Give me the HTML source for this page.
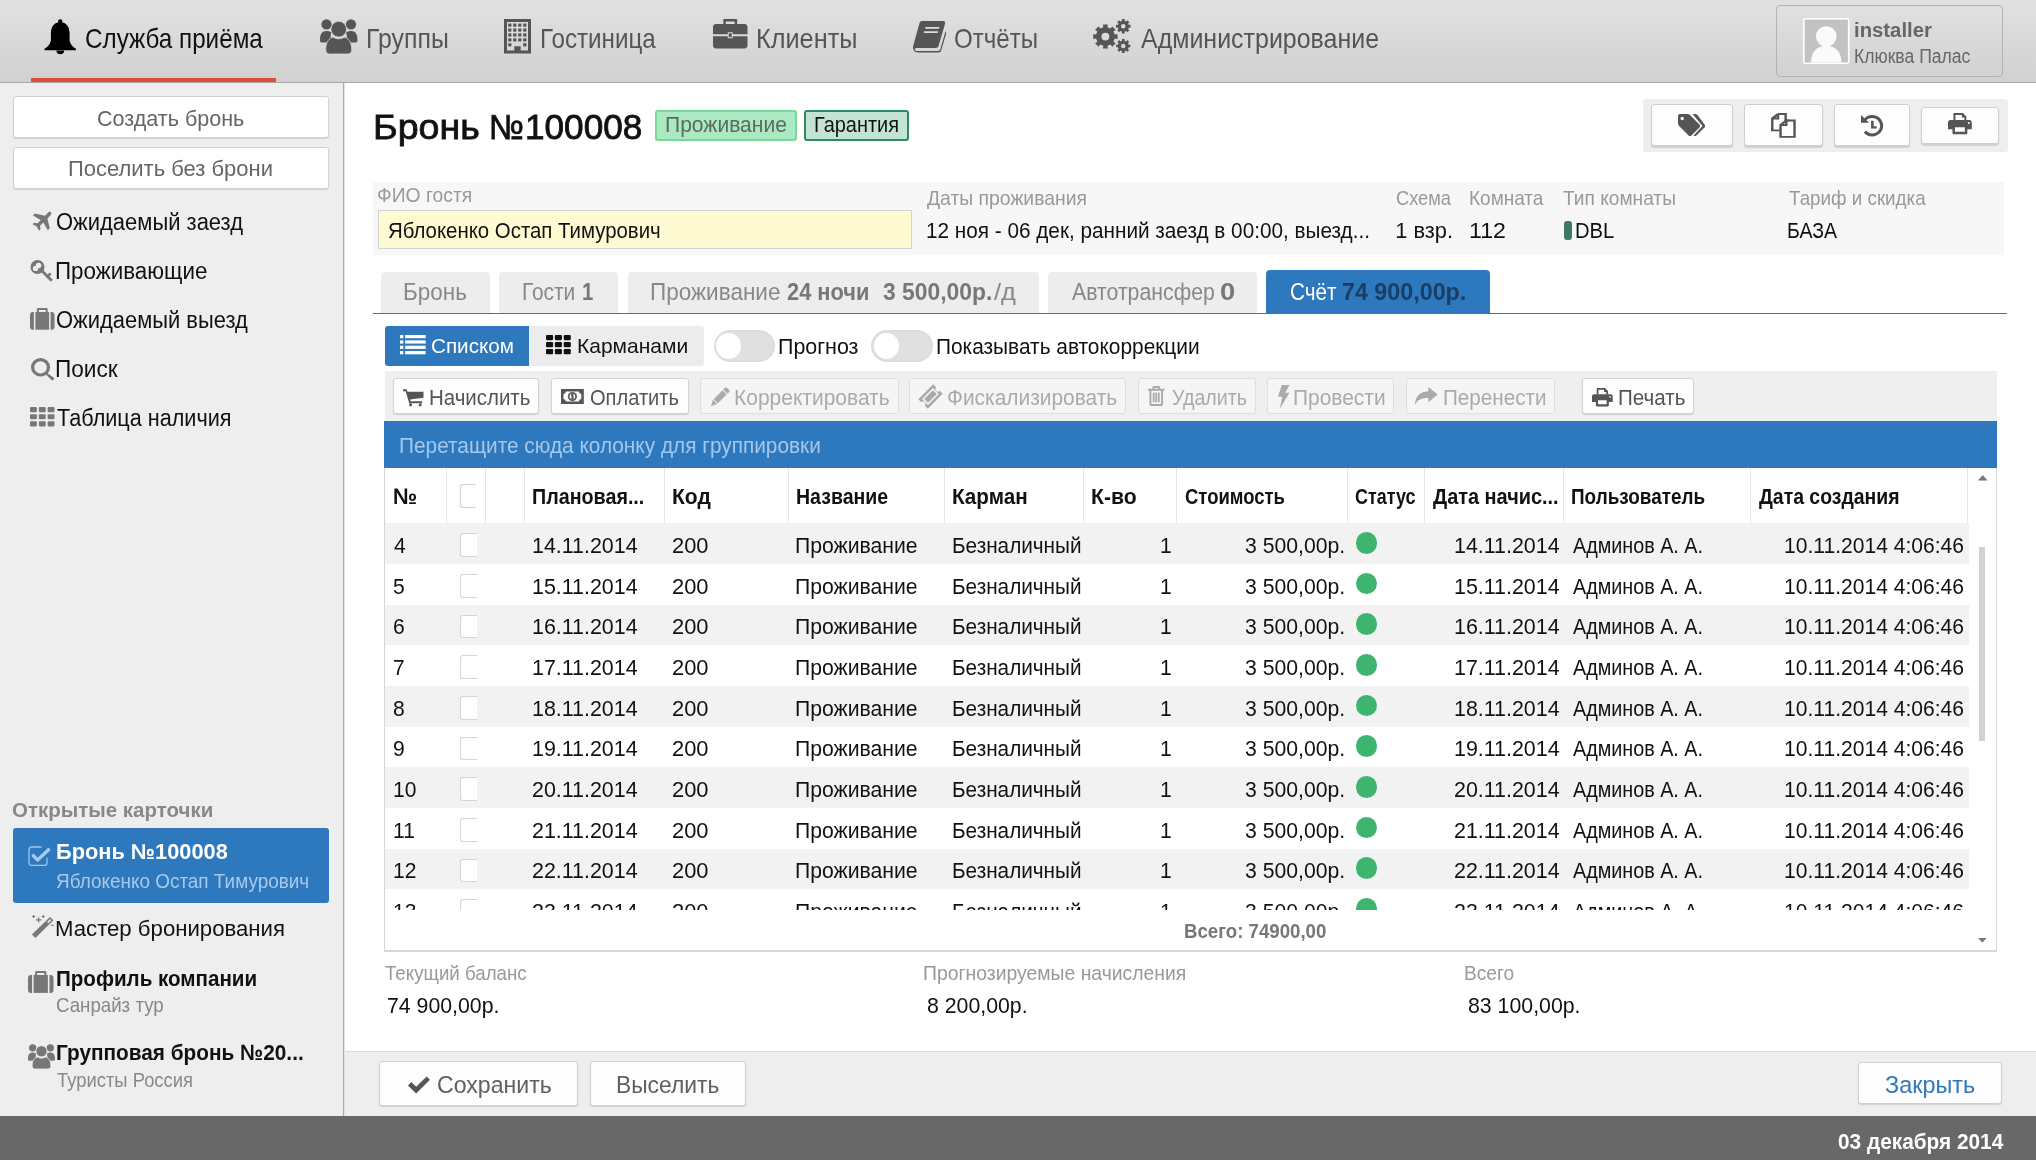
<!DOCTYPE html>
<html><head><meta charset="utf-8"><title>Бронь №100008</title>
<style>
html,body{margin:0;padding:0;}
body{width:2036px;height:1160px;position:relative;overflow:hidden;background:#fff;font-family:"Liberation Sans",sans-serif;}
.t{position:absolute;white-space:nowrap;transform-origin:0 0;}
.b{position:absolute;}
.i{position:absolute;overflow:visible;}
#root{position:absolute;left:0;top:0;width:2036px;height:1160px;overflow:hidden;will-change:transform;background:#fff;}
</style></head><body>
<div id="root">
<div class="b" style="left:0.00px;top:0.00px;width:2036.00px;height:82.00px;background:linear-gradient(#e1e1e1,#d1d1d1);"></div>
<div class="b" style="left:0.00px;top:82.00px;width:2036.00px;height:1.00px;background:#a9a9a9;"></div>
<div class="b" style="left:31.00px;top:78.00px;width:245.00px;height:3.50px;background:#e2493a;"></div>
<svg class="i" style="left:43.50px;top:19.00px;width:32.50px;height:35.00px;fill:#000;" viewBox="0 0 32 35" preserveAspectRatio="none"><circle cx="16" cy="2.4" r="2.2"/><path d="M16 3.2C9.8 3.2 6.8 8 6.8 14.5V20.5C6.8 24.5 4 27.5 0.5 29.8V31.2H31.5V29.8C28 27.5 25.2 24.5 25.2 20.5V14.5C25.2 8 22.2 3.2 16 3.2Z"/><path d="M12.2 31.5A3.8 3.8 0 0 0 19.8 31.5Z"/></svg>
<div class="t" style="left:84.79px;top:25.37px;font-size:27.91px;line-height:27.91px;color:#111;transform:scaleX(0.8682);">Служба приёма</div>
<svg class="i" style="left:320.00px;top:19.00px;width:37.50px;height:35.00px;fill:#555;" viewBox="0 0 38 35" preserveAspectRatio="none"><circle cx="6.6" cy="5.4" r="5.2"/><circle cx="31.4" cy="5.4" r="5.2"/><path d="M0 21C0 15 2 12 6.6 12C8.6 12 10.2 12.5 11.8 13.5C10.8 15 10.6 17 11 19.5C10 20.5 9 21.5 8.5 23.5H1.5C0.5 23.5 0 22.5 0 21Z"/><path d="M38 21C38 15 36 12 31.4 12C29.4 12 27.8 12.5 26.2 13.5C27.2 15 27.4 17 27 19.5C28 20.5 29 21.5 29.5 23.5H36.5C37.5 23.5 38 22.5 38 21Z"/><circle cx="19" cy="10.2" r="7.9" stroke="#d8d8d8" stroke-width="0.8"/><path d="M5.8 30.5C5.8 23 9.5 18.6 13.6 18.2C15.2 19.3 17 19.8 19 19.8C21 19.8 22.8 19.3 24.4 18.2C28.5 18.6 32.2 23 32.2 30.5C32.2 33.5 30.5 35 28.2 35H9.8C7.5 35 5.8 33.5 5.8 30.5Z" stroke="#d8d8d8" stroke-width="0.8"/></svg>
<div class="t" style="left:365.51px;top:25.07px;font-size:27.91px;line-height:27.91px;color:#555;transform:scaleX(0.8910);">Группы</div>
<svg class="i" style="left:504.00px;top:19.00px;width:27.00px;height:34.50px;fill:#555;" viewBox="0 0 27 35" preserveAspectRatio="none"><path fill-rule="evenodd" d="M0 0H27V35H0ZM3 3V32H10.3V27.6H16.7V32H24V3Z"/><rect x="4.2" y="4.6" width="3.2" height="3.2"/><rect x="9.2" y="4.6" width="3.2" height="3.2"/><rect x="14.2" y="4.6" width="3.2" height="3.2"/><rect x="19.2" y="4.6" width="3.2" height="3.2"/><rect x="4.2" y="9.6" width="3.2" height="3.2"/><rect x="9.2" y="9.6" width="3.2" height="3.2"/><rect x="14.2" y="9.6" width="3.2" height="3.2"/><rect x="19.2" y="9.6" width="3.2" height="3.2"/><rect x="4.2" y="14.6" width="3.2" height="3.2"/><rect x="9.2" y="14.6" width="3.2" height="3.2"/><rect x="14.2" y="14.6" width="3.2" height="3.2"/><rect x="19.2" y="14.6" width="3.2" height="3.2"/><rect x="4.2" y="19.6" width="3.2" height="3.2"/><rect x="9.2" y="19.6" width="3.2" height="3.2"/><rect x="14.2" y="19.6" width="3.2" height="3.2"/><rect x="19.2" y="19.6" width="3.2" height="3.2"/><rect x="4.2" y="24.6" width="3.2" height="3.2"/><rect x="19.2" y="24.6" width="3.2" height="3.2"/></svg>
<div class="t" style="left:539.77px;top:25.07px;font-size:27.91px;line-height:27.91px;color:#555;transform:scaleX(0.8667);">Гостиница</div>
<svg class="i" style="left:713.00px;top:19.20px;width:34.50px;height:29.50px;fill:#555;" viewBox="0 0 35 30" preserveAspectRatio="none"><path fill-rule="evenodd" d="M10.5 0H24.5V5H22V2.5H13V5H10.5Z"/><path d="M0 8C0 6 1.5 5 3 5H32C33.5 5 35 6 35 8V15.5H20V13.5H15V15.5H0Z"/><path d="M0 17.5H15V19.5H20V17.5H35V27C35 28.5 34 30 32 30H3C1 30 0 28.5 0 27Z"/><rect x="16" y="14.5" width="3" height="4"/></svg>
<div class="t" style="left:755.98px;top:25.07px;font-size:27.91px;line-height:27.91px;color:#555;transform:scaleX(0.9060);">Клиенты</div>
<svg class="i" style="left:913.00px;top:20.50px;width:33.00px;height:31.50px;fill:#555;" viewBox="0 0 33 32" preserveAspectRatio="none"><path d="M9 0H30C32 0 32.5 1.5 32 3L25.5 25.5C25 27 24 27.5 22.5 27.5H3.5C2 27.5 1.5 28.5 2 29.5C2.5 30.2 3.2 30.5 4.5 30.5H25C26 30.5 27 29.8 27.3 28.8L32.5 10.5L33 12C33.2 12.5 33.2 13 33 13.5L28 30.5C27.5 31.5 26.5 32 25 32H5C2.5 32 0.5 30.5 0 28C-0.2 27 0 26 0.3 25L6.5 2C7 0.7 7.8 0 9 0Z"/><path d="M12.5 6H26.5L26 7.8H12Z M11.2 10.5H25.2L24.7 12.3H10.7Z" fill="#dcdcdc"/></svg>
<div class="t" style="left:953.92px;top:25.07px;font-size:27.91px;line-height:27.91px;color:#555;transform:scaleX(0.8632);">Отчёты</div>
<svg class="i" style="left:1093.40px;top:19.30px;width:37.60px;height:34.10px;fill:#555;" viewBox="0 0 37 34" preserveAspectRatio="none"><path fill-rule="evenodd" d="M21.38 15.49 L24.17 15.12 L24.17 19.88 L21.38 19.51 L20.12 22.57 L22.34 24.28 L18.98 27.64 L17.27 25.42 L14.21 26.68 L14.58 29.47 L9.82 29.47 L10.19 26.68 L7.13 25.42 L5.42 27.64 L2.06 24.28 L4.28 22.57 L3.02 19.51 L0.23 19.88 L0.23 15.12 L3.02 15.49 L4.28 12.43 L2.06 10.72 L5.42 7.36 L7.13 9.58 L10.19 8.32 L9.82 5.53 L14.58 5.53 L14.21 8.32 L17.27 9.58 L18.98 7.36 L22.34 10.72 L20.12 12.43 Z M8.30 17.50 a3.90 3.90 0 1 0 7.80 0 a3.90 3.90 0 1 0 -7.80 0 Z"/><path fill-rule="evenodd" d="M35.27 6.00 L36.96 5.78 L36.96 8.62 L35.27 8.40 L34.52 10.22 L35.87 11.26 L33.86 13.27 L32.82 11.92 L31.00 12.67 L31.22 14.36 L28.38 14.36 L28.60 12.67 L26.78 11.92 L25.74 13.27 L23.73 11.26 L25.08 10.22 L24.33 8.40 L22.64 8.62 L22.64 5.78 L24.33 6.00 L25.08 4.18 L23.73 3.14 L25.74 1.13 L26.78 2.48 L28.60 1.73 L28.38 0.04 L31.22 0.04 L31.00 1.73 L32.82 2.48 L33.86 1.13 L35.87 3.14 L34.52 4.18 Z M27.60 7.20 a2.20 2.20 0 1 0 4.40 0 a2.20 2.20 0 1 0 -4.40 0 Z"/><path fill-rule="evenodd" d="M35.07 25.74 L36.76 25.51 L36.76 28.29 L35.07 28.06 L34.35 29.81 L35.70 30.84 L33.74 32.80 L32.71 31.45 L30.96 32.17 L31.19 33.86 L28.41 33.86 L28.64 32.17 L26.89 31.45 L25.86 32.80 L23.90 30.84 L25.25 29.81 L24.53 28.06 L22.84 28.29 L22.84 25.51 L24.53 25.74 L25.25 23.99 L23.90 22.96 L25.86 21.00 L26.89 22.35 L28.64 21.63 L28.41 19.94 L31.19 19.94 L30.96 21.63 L32.71 22.35 L33.74 21.00 L35.70 22.96 L34.35 23.99 Z M27.60 26.90 a2.20 2.20 0 1 0 4.40 0 a2.20 2.20 0 1 0 -4.40 0 Z"/></svg>
<div class="t" style="left:1140.50px;top:25.07px;font-size:27.91px;line-height:27.91px;color:#555;transform:scaleX(0.8948);">Администрирование</div>
<div class="b" style="left:1775.50px;top:5.00px;width:227.00px;height:71.50px;border:1px solid #b3b3b3;border-radius:4px;box-sizing:border-box;"></div>
<svg class="i" style="left:1803.00px;top:17.60px;width:46.50px;height:46.10px;" viewBox="0 0 46 46" preserveAspectRatio="none"><rect x="0" y="0" width="46" height="46" rx="2.5" fill="#ffffff"/><rect x="1.6" y="1.6" width="42.8" height="42.8" fill="#c2c2c2"/><circle cx="23" cy="18.5" r="10.2" fill="#fafafa"/><path d="M8 44.4C8 34 13.5 27.8 23 27.8C32.5 27.8 38 34 38 44.4Z" fill="#fafafa"/></svg>
<div class="t" style="left:1853.88px;top:19.78px;font-size:20.93px;line-height:20.93px;color:#666;font-weight:bold;transform:scaleX(0.9708);">installer</div>
<div class="t" style="left:1854.09px;top:46.53px;font-size:19.33px;line-height:19.33px;color:#666;transform:scaleX(0.9091);">Клюква Палас</div>
<div class="b" style="left:0.00px;top:83.00px;width:343.00px;height:1033.00px;background:#eeeeee;"></div>
<div class="b" style="left:343.00px;top:83.00px;width:1.00px;height:1033.00px;background:#ababab;"></div>
<div class="b" style="left:344.00px;top:83.00px;width:1.00px;height:1033.00px;background:#e2e2e2;"></div>
<div class="b" style="left:13.00px;top:96.00px;width:316.00px;height:41.50px;background:#fff;border:1px solid #d2d2d2;border-radius:3px;box-sizing:border-box;box-shadow:0 1px 1px rgba(0,0,0,0.12);"></div>
<div class="t" style="left:97.42px;top:106.60px;font-size:22.67px;line-height:22.67px;color:#666;transform:scaleX(0.9513);">Создать бронь</div>
<div class="b" style="left:13.00px;top:147.00px;width:316.00px;height:41.50px;background:#fff;border:1px solid #d2d2d2;border-radius:3px;box-sizing:border-box;box-shadow:0 1px 1px rgba(0,0,0,0.12);"></div>
<div class="t" style="left:68.44px;top:157.40px;font-size:22.67px;line-height:22.67px;color:#666;transform:scaleX(0.9700);">Поселить без брони</div>
<svg class="i" style="left:32.50px;top:210.00px;width:20.00px;height:20.50px;fill:#777;" viewBox="0 0 20 20.5" preserveAspectRatio="none"><g transform="rotate(45 10 10.25)"><path d="M10 -1C11.3 -1 11.8 0.5 11.8 2V5.8L20.5 11.2V14L11.8 11.6V16.2L14.6 18.4V20.4L10 19.2L5.4 20.4V18.4L8.2 16.2V11.6L-0.5 14V11.2L8.2 5.8V2C8.2 0.5 8.7 -1 10 -1Z"/></g></svg>
<div class="t" style="left:56.01px;top:209.82px;font-size:24.42px;line-height:24.42px;color:#111;transform:scaleX(0.9000);">Ожидаемый заезд</div>
<svg class="i" style="left:30.00px;top:259.50px;width:23.00px;height:22.00px;fill:#777;" viewBox="0 0 23 22" preserveAspectRatio="none"><circle cx="7.5" cy="7" r="7"/><circle cx="5.6" cy="8.4" r="2.7" fill="#eeeeee"/><circle cx="8.6" cy="5.4" r="2.7" fill="#eeeeee"/><path d="M10.8 11.8L12.8 9.8L22.8 19.8L20.8 21.8Z"/><path d="M15.6 16.6L19.8 12.4L21.6 14.2L17.4 18.4Z"/></svg>
<div class="t" style="left:55.21px;top:258.82px;font-size:24.42px;line-height:24.42px;color:#111;transform:scaleX(0.9170);">Проживающие</div>
<svg class="i" style="left:30.00px;top:308.30px;width:24.50px;height:21.70px;fill:#777;" viewBox="0 0 25 22" preserveAspectRatio="none"><path fill-rule="evenodd" d="M8.5 0H16.5C17.5 0 18 0.5 18 1.5V4H16V2H9V4H7V1.5C7 0.5 7.5 0 8.5 0Z"/><path d="M0 7C0 5 1 4 3 4H4V22H3C1 22 0 21 0 19Z"/><rect x="5.5" y="4" width="14" height="18"/><path d="M25 7C25 5 24 4 22 4H21V22H22C24 22 25 21 25 19Z"/></svg>
<div class="t" style="left:56.01px;top:308.32px;font-size:24.42px;line-height:24.42px;color:#111;transform:scaleX(0.8987);">Ожидаемый выезд</div>
<svg class="i" style="left:30.70px;top:358.00px;width:23.10px;height:22.50px;fill:#777;" viewBox="0 0 23 23" preserveAspectRatio="none"><path fill-rule="evenodd" d="M9.5 0A9.5 9.5 0 1 1 9.5 19A9.5 9.5 0 1 1 9.5 0ZM9.5 3.2A6.3 6.3 0 1 0 9.5 15.8A6.3 6.3 0 1 0 9.5 3.2Z"/><path d="M15 14.5L22.5 20C23.2 20.7 23.2 21.6 22.5 22.3C21.8 23 20.9 23 20.2 22.3L14 16Z"/></svg>
<div class="t" style="left:55.19px;top:357.32px;font-size:24.42px;line-height:24.42px;color:#111;transform:scaleX(0.9269);">Поиск</div>
<svg class="i" style="left:30.00px;top:407.00px;width:24.50px;height:19.50px;fill:#777;" viewBox="0 0 25 19" preserveAspectRatio="none"><rect x="0.00" y="0.00" width="7.00" height="5.00" rx="1.1"/><rect x="9.00" y="0.00" width="7.00" height="5.00" rx="1.1"/><rect x="18.00" y="0.00" width="7.00" height="5.00" rx="1.1"/><rect x="0.00" y="7.00" width="7.00" height="5.00" rx="1.1"/><rect x="9.00" y="7.00" width="7.00" height="5.00" rx="1.1"/><rect x="18.00" y="7.00" width="7.00" height="5.00" rx="1.1"/><rect x="0.00" y="14.00" width="7.00" height="5.00" rx="1.1"/><rect x="9.00" y="14.00" width="7.00" height="5.00" rx="1.1"/><rect x="18.00" y="14.00" width="7.00" height="5.00" rx="1.1"/></svg>
<div class="t" style="left:56.57px;top:406.32px;font-size:24.42px;line-height:24.42px;color:#111;transform:scaleX(0.8857);">Таблица наличия</div>
<div class="t" style="left:11.98px;top:799.52px;font-size:20.64px;line-height:20.64px;color:#888;font-weight:bold;transform:scaleX(0.9934);">Открытые карточки</div>
<div class="b" style="left:13.00px;top:828.00px;width:316.30px;height:74.70px;background:#2e78bd;border-radius:3px;"></div>
<svg class="i" style="left:28.00px;top:845.80px;width:23.00px;height:20.40px;" viewBox="0 0 23 20" preserveAspectRatio="none"><path fill="none" stroke="#a3c4e6" stroke-width="1.3" d="M13.5 1H3.4A2.4 2.4 0 0 0 1 3.4V16.6A2.4 2.4 0 0 0 3.4 19H16.6A2.4 2.4 0 0 0 19 16.6V11.5"/><path fill="none" stroke="#a9cbec" stroke-width="3.3" d="M4.3 8.6L9.6 13.6L21.6 2.6"/></svg>
<div class="t" style="left:55.58px;top:842.09px;font-size:21.51px;line-height:21.51px;color:#fff;font-weight:bold;transform:scaleX(1.0126);">Бронь №100008</div>
<div class="t" style="left:56.05px;top:871.71px;font-size:19.48px;line-height:19.48px;color:#a9c9ea;transform:scaleX(0.9722);">Яблокенко Остап Тимурович</div>
<svg class="i" style="left:30.70px;top:915.00px;width:23.30px;height:23.00px;fill:#777;stroke:#777;" viewBox="0 0 23 23" preserveAspectRatio="none"><path fill="none" stroke-width="4.8" d="M2.6 21.2L20.4 3.6"/><path fill="none" stroke="#eeeeee" stroke-width="1.6" d="M16.4 7.6L19.4 4.6"/><path fill="none" stroke-width="1.1" d="M7.6 2.2V7.6M4.9 4.9H10.3M2.6 0V3M1.1 1.5H4.1M12.1 0V3M10.6 1.5H13.6M19.5 10.2H22.5"/></svg>
<div class="t" style="left:55.22px;top:917.40px;font-size:22.67px;line-height:22.67px;color:#111;transform:scaleX(0.9786);">Мастер бронирования</div>
<svg class="i" style="left:28.00px;top:970.70px;width:25.50px;height:21.90px;fill:#777;" viewBox="0 0 25 22" preserveAspectRatio="none"><path fill-rule="evenodd" d="M8.5 0H16.5C17.5 0 18 0.5 18 1.5V4H16V2H9V4H7V1.5C7 0.5 7.5 0 8.5 0Z"/><path d="M0 7C0 5 1 4 3 4H4V22H3C1 22 0 21 0 19Z"/><rect x="5.5" y="4" width="14" height="18"/><path d="M25 7C25 5 24 4 22 4H21V22H22C24 22 25 21 25 19Z"/></svg>
<div class="t" style="left:55.66px;top:966.60px;font-size:22.67px;line-height:22.67px;color:#111;font-weight:bold;transform:scaleX(0.9081);">Профиль компании</div>
<div class="t" style="left:56.07px;top:995.89px;font-size:19.62px;line-height:19.62px;color:#888;transform:scaleX(0.9527);">Санрайз тур</div>
<svg class="i" style="left:28.00px;top:1044.00px;width:27.00px;height:25.00px;fill:#777;" viewBox="0 0 38 35" preserveAspectRatio="none"><circle cx="6.6" cy="5.4" r="5.2"/><circle cx="31.4" cy="5.4" r="5.2"/><path d="M0 21C0 15 2 12 6.6 12C8.6 12 10.2 12.5 11.8 13.5C10.8 15 10.6 17 11 19.5C10 20.5 9 21.5 8.5 23.5H1.5C0.5 23.5 0 22.5 0 21Z"/><path d="M38 21C38 15 36 12 31.4 12C29.4 12 27.8 12.5 26.2 13.5C27.2 15 27.4 17 27 19.5C28 20.5 29 21.5 29.5 23.5H36.5C37.5 23.5 38 22.5 38 21Z"/><circle cx="19" cy="10.2" r="7.9" stroke="#eeeeee" stroke-width="1.2"/><path d="M5.8 30.5C5.8 23 9.5 18.6 13.6 18.2C15.2 19.3 17 19.8 19 19.8C21 19.8 22.8 19.3 24.4 18.2C28.5 18.6 32.2 23 32.2 30.5C32.2 33.5 30.5 35 28.2 35H9.8C7.5 35 5.8 33.5 5.8 30.5Z" stroke="#eeeeee" stroke-width="1.2"/></svg>
<div class="t" style="left:55.65px;top:1041.84px;font-size:21.80px;line-height:21.80px;color:#111;font-weight:bold;transform:scaleX(0.9535);">Групповая бронь №20...</div>
<div class="t" style="left:56.63px;top:1071.39px;font-size:19.62px;line-height:19.62px;color:#888;transform:scaleX(0.9383);">Туристы Россия</div>
<div class="t" style="left:373.39px;top:109.81px;font-size:34.59px;line-height:34.59px;color:#111;transform:scaleX(1.0861);-webkit-text-stroke:0.8px #111;">Бронь</div>
<div class="t" style="left:489.26px;top:109.81px;font-size:34.59px;line-height:34.59px;color:#111;transform:scaleX(0.9430);-webkit-text-stroke:0.8px #111;">№</div>
<div class="t" style="left:525.16px;top:109.81px;font-size:34.59px;line-height:34.59px;color:#111;transform:scaleX(1.0162);-webkit-text-stroke:0.8px #111;">100008</div>
<div class="b" style="left:654.80px;top:109.50px;width:142.30px;height:31.30px;background:#aae9c1;border:2px solid #78d896;border-radius:3px;box-sizing:border-box;"></div>
<div class="t" style="left:664.92px;top:114.79px;font-size:21.51px;line-height:21.51px;color:#5a6b5f;transform:scaleX(0.9789);">Проживание</div>
<div class="b" style="left:803.60px;top:109.50px;width:105.20px;height:31.30px;background:#c3e3d5;border:2px solid #2b8a62;border-radius:3px;box-sizing:border-box;"></div>
<div class="t" style="left:813.50px;top:114.79px;font-size:21.51px;line-height:21.51px;color:#111;transform:scaleX(0.9275);">Гарантия</div>
<div class="b" style="left:1642.70px;top:98.60px;width:365.30px;height:53.10px;background:#eeeeee;border-radius:3px;"></div>
<div class="b" style="left:1651.30px;top:104.40px;width:81.40px;height:41.50px;background:#fdfdfd;border:1px solid #d0d0d0;border-radius:3px;box-sizing:border-box;box-shadow:0 1.5px 1px rgba(0,0,0,0.13);"></div>
<svg class="i" style="left:1678.00px;top:114.00px;width:27.50px;height:22.00px;fill:#555;" viewBox="0 0 27.5 22" preserveAspectRatio="none"><path fill-rule="evenodd" d="M0 2C0 0.8 0.8 0 2 0H9.5C10.5 0 11.3 0.4 12 1.1L21.5 10.6C22.3 11.4 22.3 12.6 21.5 13.4L13.4 21.5C12.6 22.3 11.4 22.3 10.6 21.5L1.1 12C0.4 11.3 0 10.5 0 9.5ZM4.2 2.8A1.7 1.7 0 1 0 4.2 6.2A1.7 1.7 0 1 0 4.2 2.8Z"/><path d="M14.5 0H17C18 0 18.8 0.4 19.5 1.1L26.5 10.6C27.3 11.4 27.3 12.6 26.5 13.4L18.4 21.5C17.6 22.3 16.5 22.3 15.6 21.6L24.5 12Z"/></svg>
<div class="b" style="left:1743.60px;top:104.40px;width:79.60px;height:41.50px;background:#fdfdfd;border:1px solid #d0d0d0;border-radius:3px;box-sizing:border-box;box-shadow:0 1.5px 1px rgba(0,0,0,0.13);"></div>
<svg class="i" style="left:1771.20px;top:112.80px;width:24.80px;height:24.90px;stroke:#555;" viewBox="0 0 19.5 25" preserveAspectRatio="none"><path fill="none" stroke-width="1.9" d="M5.5 1H11.5V7.5H14.5M5.5 1L1 5.5V17.5H7.5M5.5 1V5.5H1"/><path fill="none" stroke-width="1.9" d="M12 7.5H18.5V24H7.5V12ZM12 7.5V12H7.5"/></svg>
<div class="b" style="left:1834.00px;top:104.40px;width:76.40px;height:41.50px;background:#fdfdfd;border:1px solid #d0d0d0;border-radius:3px;box-sizing:border-box;box-shadow:0 1.5px 1px rgba(0,0,0,0.13);"></div>
<svg class="i" style="left:1860.80px;top:115.00px;width:22.20px;height:21.40px;fill:#555;" viewBox="0 0 22 22" preserveAspectRatio="none"><path d="M11 0C17 0 22 4.9 22 11C22 17.1 17 22 11 22C7.7 22 4.7 20.5 2.7 18.2L5 16C6.5 17.8 8.6 19 11 19C15.4 19 19 15.4 19 11C19 6.6 15.4 3 11 3C8.8 3 6.8 3.9 5.4 5.4L8 8H0V0L3.3 3.3C5.3 1.3 8 0 11 0Z"/><path d="M10 6H12.5V11.5H15.5V14H10Z"/></svg>
<div class="b" style="left:1921.30px;top:107.40px;width:78.00px;height:36.30px;background:#fdfdfd;border:1px solid #d0d0d0;border-radius:3px;box-sizing:border-box;box-shadow:0 1.5px 1px rgba(0,0,0,0.13);"></div>
<svg class="i" style="left:1948.40px;top:112.80px;width:23.80px;height:21.20px;fill:#555;" viewBox="0 0 24 21" preserveAspectRatio="none"><path fill-rule="evenodd" d="M5.5 0H15L18.5 3.5V7H16.5V4.5H14V2H7.5V7H5.5Z"/><path fill-rule="evenodd" d="M2.5 7H21.5C23 7 24 8 24 9.5V16H19.5V19.5C19.5 20.5 19 21 18 21H6C5 21 4.5 20.5 4.5 19.5V16H0V9.5C0 8 1 7 2.5 7ZM7 14V18.5H17V14ZM21 9A1 1 0 1 0 21 11A1 1 0 1 0 21 9Z"/></svg>
<div class="b" style="left:373.30px;top:182.00px;width:1630.70px;height:72.50px;background:#f7f7f7;"></div>
<div class="t" style="left:377.24px;top:184.95px;font-size:20.49px;line-height:20.49px;color:#999;transform:scaleX(0.9424);">ФИО гостя</div>
<div class="b" style="left:378.30px;top:210.30px;width:534.10px;height:39.20px;background:#fefad2;border:1px solid #d3d3d3;box-sizing:border-box;"></div>
<div class="t" style="left:388.48px;top:219.84px;font-size:21.80px;line-height:21.80px;color:#111;transform:scaleX(0.9353);">Яблокенко Остап Тимурович</div>
<div class="t" style="left:926.90px;top:188.05px;font-size:20.49px;line-height:20.49px;color:#999;transform:scaleX(0.9449);">Даты проживания</div>
<div class="t" style="left:926.44px;top:219.94px;font-size:21.80px;line-height:21.80px;color:#111;transform:scaleX(0.9510);">12 ноя - 06 дек, ранний заезд в 00:00, выезд...</div>
<div class="t" style="left:1396.09px;top:188.05px;font-size:20.49px;line-height:20.49px;color:#999;transform:scaleX(0.8902);">Схема</div>
<div class="t" style="left:1395.37px;top:219.94px;font-size:21.80px;line-height:21.80px;color:#111;">1 взр.</div>
<div class="t" style="left:1469.28px;top:188.05px;font-size:20.49px;line-height:20.49px;color:#999;transform:scaleX(0.9275);">Комната</div>
<div class="t" style="left:1469.27px;top:219.94px;font-size:21.80px;line-height:21.80px;color:#111;transform:scaleX(1.0608);">112</div>
<div class="t" style="left:1563.22px;top:188.05px;font-size:20.49px;line-height:20.49px;color:#999;transform:scaleX(0.9339);">Тип комнаты</div>
<div class="b" style="left:1563.60px;top:220.70px;width:8.70px;height:19.30px;background:#3f7a69;border-radius:3px;"></div>
<div class="t" style="left:1574.88px;top:219.94px;font-size:21.80px;line-height:21.80px;color:#111;transform:scaleX(0.9273);">DBL</div>
<div class="t" style="left:1788.62px;top:188.05px;font-size:20.49px;line-height:20.49px;color:#999;transform:scaleX(0.9180);">Тариф и скидка</div>
<div class="t" style="left:1787.44px;top:219.94px;font-size:21.80px;line-height:21.80px;color:#111;transform:scaleX(0.8970);">БАЗА</div>
<div class="b" style="left:381.00px;top:272.40px;width:108.60px;height:40.60px;background:#ededed;border-radius:4px 4px 0 0;"></div>
<div class="t" style="left:403.20px;top:280.54px;font-size:23.69px;line-height:23.69px;color:#888;transform:scaleX(0.9497);">Бронь</div>
<div class="b" style="left:499.30px;top:272.40px;width:118.50px;height:40.60px;background:#ededed;border-radius:4px 4px 0 0;"></div>
<div class="t" style="left:521.93px;top:280.54px;font-size:23.69px;line-height:23.69px;color:#888;transform:scaleX(0.8811);">Гости</div>
<div class="t" style="left:582.27px;top:280.54px;font-size:23.69px;line-height:23.69px;color:#777;font-weight:bold;transform:scaleX(0.8621);">1</div>
<div class="b" style="left:627.80px;top:272.40px;width:410.90px;height:40.60px;background:#ededed;border-radius:4px 4px 0 0;"></div>
<div class="t" style="left:650.40px;top:280.54px;font-size:23.69px;line-height:23.69px;color:#888;transform:scaleX(0.9514);">Проживание</div>
<div class="t" style="left:787.14px;top:280.54px;font-size:23.69px;line-height:23.69px;color:#777;font-weight:bold;transform:scaleX(0.9212);">24 ночи</div>
<div class="t" style="left:882.83px;top:280.54px;font-size:23.69px;line-height:23.69px;color:#777;font-weight:bold;transform:scaleX(0.9657);">3 500,00р.</div>
<div class="t" style="left:993.50px;top:280.54px;font-size:23.69px;line-height:23.69px;color:#888;transform:scaleX(1.0739);">/д</div>
<div class="b" style="left:1048.30px;top:272.40px;width:209.00px;height:40.60px;background:#ededed;border-radius:4px 4px 0 0;"></div>
<div class="t" style="left:1072.00px;top:280.54px;font-size:23.69px;line-height:23.69px;color:#888;transform:scaleX(0.8979);">Автотрансфер</div>
<div class="t" style="left:1219.91px;top:280.54px;font-size:23.69px;line-height:23.69px;color:#777;font-weight:bold;transform:scaleX(1.1552);">0</div>
<div class="b" style="left:1266.20px;top:270.40px;width:224.30px;height:42.60px;background:#2e78bd;border-radius:4px 4px 0 0;"></div>
<div class="t" style="left:1289.87px;top:280.54px;font-size:23.69px;line-height:23.69px;color:#fff;transform:scaleX(0.8732);">Счёт</div>
<div class="t" style="left:1342.07px;top:280.54px;font-size:23.69px;line-height:23.69px;color:#1a3e66;font-weight:bold;transform:scaleX(0.9830);">74 900,00р.</div>
<div class="b" style="left:373.30px;top:312.50px;width:1633.70px;height:1.50px;background:#2e78bd;"></div>
<div class="b" style="left:384.80px;top:326.00px;width:318.80px;height:40.00px;background:#ececec;border-radius:3px;"></div>
<div class="b" style="left:384.80px;top:326.00px;width:144.20px;height:40.00px;background:#2e78bd;border-radius:3px 0 0 3px;"></div>
<svg class="i" style="left:399.60px;top:335.00px;width:25.70px;height:19.30px;fill:#fff;" viewBox="0 0 26 19.1" preserveAspectRatio="none"><rect x="0" y="0.0" width="3.4" height="3.2"/><rect x="5.2" y="0.0" width="20.8" height="3.2"/><rect x="0" y="5.3" width="3.4" height="3.2"/><rect x="5.2" y="5.3" width="20.8" height="3.2"/><rect x="0" y="10.6" width="3.4" height="3.2"/><rect x="5.2" y="10.6" width="20.8" height="3.2"/><rect x="0" y="15.9" width="3.4" height="3.2"/><rect x="5.2" y="15.9" width="20.8" height="3.2"/></svg>
<div class="t" style="left:430.97px;top:336.08px;font-size:20.93px;line-height:20.93px;color:#fff;transform:scaleX(0.9874);">Списком</div>
<svg class="i" style="left:546.20px;top:335.00px;width:24.80px;height:19.30px;fill:#111;" viewBox="0 0 25 19" preserveAspectRatio="none"><rect x="0.00" y="0.00" width="7.13" height="5.13" rx="1.1"/><rect x="8.93" y="0.00" width="7.13" height="5.13" rx="1.1"/><rect x="17.87" y="0.00" width="7.13" height="5.13" rx="1.1"/><rect x="0.00" y="6.93" width="7.13" height="5.13" rx="1.1"/><rect x="8.93" y="6.93" width="7.13" height="5.13" rx="1.1"/><rect x="17.87" y="6.93" width="7.13" height="5.13" rx="1.1"/><rect x="0.00" y="13.87" width="7.13" height="5.13" rx="1.1"/><rect x="8.93" y="13.87" width="7.13" height="5.13" rx="1.1"/><rect x="17.87" y="13.87" width="7.13" height="5.13" rx="1.1"/></svg>
<div class="t" style="left:576.62px;top:336.08px;font-size:20.93px;line-height:20.93px;color:#111;transform:scaleX(1.0038);">Карманами</div>
<div class="b" style="left:713.90px;top:330.30px;width:61.40px;height:31.40px;background:#e0e0e0;border:2.5px solid #dcdcdc;border-radius:16px;box-sizing:border-box;"></div>
<div class="b" style="left:716.40px;top:333.00px;width:25.00px;height:25.80px;background:#fff;border-radius:50%;"></div>
<div class="t" style="left:777.99px;top:336.03px;font-size:21.22px;line-height:21.22px;color:#111;transform:scaleX(1.0099);">Прогноз</div>
<div class="b" style="left:871.00px;top:330.30px;width:62.10px;height:31.40px;background:#e0e0e0;border:2.5px solid #dcdcdc;border-radius:16px;box-sizing:border-box;"></div>
<div class="b" style="left:873.50px;top:333.00px;width:25.00px;height:25.80px;background:#fff;border-radius:50%;"></div>
<div class="t" style="left:935.53px;top:336.03px;font-size:21.22px;line-height:21.22px;color:#111;transform:scaleX(0.9832);">Показывать автокоррекции</div>
<div class="b" style="left:384.80px;top:371.00px;width:1612.20px;height:50.30px;background:#efefef;"></div>
<div class="b" style="left:392.70px;top:378.30px;width:146.80px;height:36.00px;background:#fdfdfd;border:1px solid #d3d3d3;border-radius:3px;box-sizing:border-box;box-shadow:0 1px 1px rgba(0,0,0,0.13);"></div>
<svg class="i" style="left:403.00px;top:389.00px;width:20.50px;height:17.50px;fill:#555;" viewBox="0 0 20.5 17.2" preserveAspectRatio="none"><path d="M0 0.3H3.6L4.5 2.6H20.5V8.6L7.2 10.3L7.6 12.1H19.2V13.9H6.2L2.6 2.2H0Z"/><circle cx="7.6" cy="15.6" r="1.5"/><circle cx="17.2" cy="15.6" r="1.5"/></svg>
<div class="t" style="left:428.66px;top:386.53px;font-size:21.22px;line-height:21.22px;color:#555;transform:scaleX(0.9639);">Начислить</div>
<div class="b" style="left:550.60px;top:378.30px;width:138.20px;height:36.00px;background:#fdfdfd;border:1px solid #d3d3d3;border-radius:3px;box-sizing:border-box;box-shadow:0 1px 1px rgba(0,0,0,0.13);"></div>
<svg class="i" style="left:561.00px;top:389.00px;width:22.80px;height:15.00px;fill:#555;" viewBox="0 0 23 15" preserveAspectRatio="none"><rect x="0" y="0" width="23" height="15"/><path d="M5 2.5H18A2.8 2.8 0 0 0 20.5 5V10A2.8 2.8 0 0 0 18 12.5H5A2.8 2.8 0 0 0 2.5 10V5A2.8 2.8 0 0 0 5 2.5Z" fill="#fdfdfd"/><circle cx="11.5" cy="7.5" r="4.6"/><circle cx="11.5" cy="7.5" r="2.9" fill="#fdfdfd"/><path d="M10.7 4.6H12.6V9.4H13.3V10.5H9.8V9.4H10.6V6.4L9.9 6.8V5.6Z"/></svg>
<div class="t" style="left:590.20px;top:386.53px;font-size:21.22px;line-height:21.22px;color:#555;transform:scaleX(0.9457);">Оплатить</div>
<div class="b" style="left:700.00px;top:378.30px;width:198.50px;height:36.00px;background:#f5f5f5;border:1px solid #dedede;border-radius:3px;box-sizing:border-box;"></div>
<svg class="i" style="left:709.50px;top:387.50px;width:19.00px;height:19.00px;fill:#aaa;" viewBox="0 0 19 19" preserveAspectRatio="none"><path d="M1.00 18.00 L7.18 16.02 L2.98 11.82ZM7.86 15.34 L16.70 6.50 L12.50 2.30 L3.66 11.14ZM17.38 5.82 L19.76 3.44 L18.34 0.66 L15.56 -0.76 L13.18 1.62Z"/></svg>
<div class="t" style="left:733.72px;top:386.53px;font-size:21.22px;line-height:21.22px;color:#aaa;transform:scaleX(0.9890);">Корректировать</div>
<div class="b" style="left:909.30px;top:378.30px;width:216.90px;height:36.00px;background:#f5f5f5;border:1px solid #dedede;border-radius:3px;box-sizing:border-box;"></div>
<svg class="i" style="left:920.00px;top:386.00px;width:21.00px;height:21.00px;fill:#aaa;" viewBox="0 0 21 21" preserveAspectRatio="none"><g transform="rotate(-45 10.5 10.5)"><path fill-rule="evenodd" d="M0 3.8H21V8A2.5 2.5 0 0 0 21 13V17.2H0V13A2.5 2.5 0 0 0 0 8ZM2.8 6.3V14.7H18.2V6.3Z"/><rect x="4.3" y="7.8" width="12.4" height="5.4"/></g></svg>
<div class="t" style="left:946.85px;top:386.53px;font-size:21.22px;line-height:21.22px;color:#aaa;transform:scaleX(0.9858);">Фискализировать</div>
<div class="b" style="left:1138.00px;top:378.30px;width:118.10px;height:36.00px;background:#f5f5f5;border:1px solid #dedede;border-radius:3px;box-sizing:border-box;"></div>
<svg class="i" style="left:1148.30px;top:386.00px;width:16.50px;height:20.00px;fill:#aaa;" viewBox="0 0 17 21" preserveAspectRatio="none"><path fill-rule="evenodd" d="M6 0H11C11.8 0 12.5 0.7 12.5 1.5V3H17V5H15.5V19C15.5 20 14.8 21 13.8 21H3.2C2.2 21 1.5 20 1.5 19V5H0V3H4.5V1.5C4.5 0.7 5.2 0 6 0ZM6.5 2V3H10.5V2ZM3.5 5V19H13.5V5Z"/><rect x="5" y="7" width="1.8" height="10"/><rect x="7.6" y="7" width="1.8" height="10"/><rect x="10.2" y="7" width="1.8" height="10"/></svg>
<div class="t" style="left:1171.61px;top:386.53px;font-size:21.22px;line-height:21.22px;color:#aaa;transform:scaleX(0.9261);">Удалить</div>
<div class="b" style="left:1267.30px;top:378.30px;width:127.10px;height:36.00px;background:#f5f5f5;border:1px solid #dedede;border-radius:3px;box-sizing:border-box;"></div>
<svg class="i" style="left:1276.50px;top:384.50px;width:12.50px;height:23.50px;fill:#aaa;" viewBox="0 0 13 26" preserveAspectRatio="none"><path d="M5 0H13L8.5 8.5H13L3 26L5.5 13H1Z"/></svg>
<div class="t" style="left:1292.83px;top:386.53px;font-size:21.22px;line-height:21.22px;color:#aaa;transform:scaleX(0.9865);">Провести</div>
<div class="b" style="left:1405.60px;top:378.30px;width:149.70px;height:36.00px;background:#f5f5f5;border:1px solid #dedede;border-radius:3px;box-sizing:border-box;"></div>
<svg class="i" style="left:1415.30px;top:386.50px;width:22.70px;height:18.00px;fill:#aaa;" viewBox="0 0 23 19" preserveAspectRatio="none"><path d="M13.5 0L23 8L13.5 16V11.5C7 11.5 2.5 13 0 19C0 11 4 5 13.5 4.5Z"/></svg>
<div class="t" style="left:1442.85px;top:386.53px;font-size:21.22px;line-height:21.22px;color:#aaa;transform:scaleX(0.9734);">Перенести</div>
<div class="b" style="left:1581.50px;top:378.30px;width:112.90px;height:36.00px;background:#fdfdfd;border:1px solid #d3d3d3;border-radius:3px;box-sizing:border-box;box-shadow:0 1px 1px rgba(0,0,0,0.13);"></div>
<svg class="i" style="left:1591.80px;top:387.50px;width:20.70px;height:18.50px;fill:#555;" viewBox="0 0 24 21" preserveAspectRatio="none"><path fill-rule="evenodd" d="M5.5 0H15L18.5 3.5V7H16.5V4.5H14V2H7.5V7H5.5Z"/><path fill-rule="evenodd" d="M2.5 7H21.5C23 7 24 8 24 9.5V16H19.5V19.5C19.5 20.5 19 21 18 21H6C5 21 4.5 20.5 4.5 19.5V16H0V9.5C0 8 1 7 2.5 7ZM7 14V18.5H17V14ZM21 9A1 1 0 1 0 21 11A1 1 0 1 0 21 9Z"/></svg>
<div class="t" style="left:1617.55px;top:386.53px;font-size:21.22px;line-height:21.22px;color:#555;transform:scaleX(0.9693);">Печать</div>
<div class="b" style="left:384.30px;top:421.30px;width:1612.70px;height:47.00px;background:#2e78bd;"></div>
<div class="t" style="left:398.53px;top:435.04px;font-size:21.80px;line-height:21.80px;color:#a3c8ed;transform:scaleX(0.9554);">Перетащите сюда колонку для группировки</div>
<div class="b" style="left:384.30px;top:468.30px;width:1612.70px;height:483.90px;border:1px solid #d5d5d5;border-bottom:2px solid #d8d8d8;border-top:none;box-sizing:border-box;background:#fff;"></div>
<div class="b" style="left:445.90px;top:468.30px;width:1.00px;height:55.00px;background:#e6e6e6;"></div>
<div class="b" style="left:484.90px;top:468.30px;width:1.00px;height:55.00px;background:#e6e6e6;"></div>
<div class="b" style="left:524.20px;top:468.30px;width:1.00px;height:55.00px;background:#e6e6e6;"></div>
<div class="b" style="left:663.80px;top:468.30px;width:1.00px;height:55.00px;background:#e6e6e6;"></div>
<div class="b" style="left:787.80px;top:468.30px;width:1.00px;height:55.00px;background:#e6e6e6;"></div>
<div class="b" style="left:943.60px;top:468.30px;width:1.00px;height:55.00px;background:#e6e6e6;"></div>
<div class="b" style="left:1083.10px;top:468.30px;width:1.00px;height:55.00px;background:#e6e6e6;"></div>
<div class="b" style="left:1176.00px;top:468.30px;width:1.00px;height:55.00px;background:#e6e6e6;"></div>
<div class="b" style="left:1347.10px;top:468.30px;width:1.00px;height:55.00px;background:#e6e6e6;"></div>
<div class="b" style="left:1423.50px;top:468.30px;width:1.00px;height:55.00px;background:#e6e6e6;"></div>
<div class="b" style="left:1562.90px;top:468.30px;width:1.00px;height:55.00px;background:#e6e6e6;"></div>
<div class="b" style="left:1749.80px;top:468.30px;width:1.00px;height:55.00px;background:#e6e6e6;"></div>
<div class="b" style="left:1967.20px;top:468.30px;width:1.00px;height:55.00px;background:#e6e6e6;"></div>
<div class="t" style="left:392.79px;top:486.25px;font-size:22.38px;line-height:22.38px;color:#111;font-weight:bold;transform:scaleX(0.9694);">№</div>
<div class="b" style="left:460.00px;top:484.20px;width:16.00px;height:24.20px;border:1px solid #d0d0d0;border-right:none;border-radius:3px 0 0 3px;box-sizing:border-box;"></div>
<div class="t" style="left:532.02px;top:486.25px;font-size:22.38px;line-height:22.38px;color:#111;font-weight:bold;transform:scaleX(0.8806);">Плановая...</div>
<div class="t" style="left:671.53px;top:486.25px;font-size:22.38px;line-height:22.38px;color:#111;font-weight:bold;transform:scaleX(0.9392);">Код</div>
<div class="t" style="left:795.53px;top:486.25px;font-size:22.38px;line-height:22.38px;color:#111;font-weight:bold;transform:scaleX(0.8722);">Название</div>
<div class="t" style="left:951.86px;top:486.25px;font-size:22.38px;line-height:22.38px;color:#111;font-weight:bold;transform:scaleX(0.9226);">Карман</div>
<div class="t" style="left:1091.22px;top:486.25px;font-size:22.38px;line-height:22.38px;color:#111;font-weight:bold;transform:scaleX(0.9457);">К-во</div>
<div class="t" style="left:1184.56px;top:486.25px;font-size:22.38px;line-height:22.38px;color:#111;font-weight:bold;transform:scaleX(0.8256);">Стоимость</div>
<div class="t" style="left:1355.08px;top:486.25px;font-size:22.38px;line-height:22.38px;color:#111;font-weight:bold;transform:scaleX(0.8014);">Статус</div>
<div class="t" style="left:1432.80px;top:486.25px;font-size:22.38px;line-height:22.38px;color:#111;font-weight:bold;transform:scaleX(0.8892);">Дата начис...</div>
<div class="t" style="left:1571.47px;top:486.25px;font-size:22.38px;line-height:22.38px;color:#111;font-weight:bold;transform:scaleX(0.8449);">Пользователь</div>
<div class="t" style="left:1758.81px;top:486.25px;font-size:22.38px;line-height:22.38px;color:#111;font-weight:bold;transform:scaleX(0.8679);">Дата создания</div>
<svg class="i" style="left:1977.50px;top:475.00px;width:9.50px;height:5.50px;fill:#777;" viewBox="0 0 10 6" preserveAspectRatio="none"><path d="M0 6L5 0L10 6Z"/></svg>
<svg class="i" style="left:1977.80px;top:937.60px;width:8.70px;height:4.40px;fill:#777;" viewBox="0 0 10 6" preserveAspectRatio="none"><path d="M0 0L5 6L10 0Z"/></svg>
<div class="b" style="left:1978.80px;top:547.00px;width:6.00px;height:193.50px;background:#d2d2d2;"></div>
<div style="position:absolute;left:0;top:0;width:2036px;height:909.8px;overflow:hidden;"><div class="b" style="left:385.30px;top:523.30px;width:1583.50px;height:40.68px;background:#f2f2f2;"></div><div class="t" style="left:393.78px;top:534.00px;font-size:22.67px;line-height:22.67px;color:#111;transform:scaleX(0.9300);">4</div><div class="b" style="left:460.00px;top:533.30px;width:17.00px;height:23.60px;background:#fff;border:1px solid #d5d5d5;border-right:none;border-radius:3px 0 0 3px;box-sizing:border-box;"></div><div class="t" style="left:531.69px;top:534.00px;font-size:22.67px;line-height:22.67px;color:#111;transform:scaleX(0.9450);">14.11.2014</div><div class="t" style="left:672.31px;top:534.00px;font-size:22.67px;line-height:22.67px;color:#111;transform:scaleX(0.9658);">200</div><div class="t" style="left:795.10px;top:534.00px;font-size:22.67px;line-height:22.67px;color:#111;transform:scaleX(0.9349);">Проживание</div><div class="t" style="left:951.54px;top:534.00px;font-size:22.67px;line-height:22.67px;color:#111;transform:scaleX(0.9146);">Безналичный</div><div class="t" style="left:1160.25px;top:534.00px;font-size:22.67px;line-height:22.67px;color:#111;transform:scaleX(0.9300);">1</div><div class="t" style="left:1244.73px;top:534.00px;font-size:22.67px;line-height:22.67px;color:#111;transform:scaleX(0.9350);">3 500,00р.</div><div class="b" style="left:1355.80px;top:532.00px;width:21.50px;height:21.50px;background:#3eb56f;border-radius:50%;"></div><div class="t" style="left:1454.00px;top:534.00px;font-size:22.67px;line-height:22.67px;color:#111;transform:scaleX(0.9450);">14.11.2014</div><div class="t" style="left:1572.70px;top:534.00px;font-size:22.67px;line-height:22.67px;color:#111;transform:scaleX(0.8718);">Админов А. А.</div><div class="t" style="left:1783.95px;top:534.00px;font-size:22.67px;line-height:22.67px;color:#111;transform:scaleX(0.9300);">10.11.2014 4:06:46</div><div class="t" style="left:393.36px;top:574.68px;font-size:22.67px;line-height:22.67px;color:#111;transform:scaleX(0.9300);">5</div><div class="b" style="left:460.00px;top:573.98px;width:17.00px;height:23.60px;background:#fff;border:1px solid #d5d5d5;border-right:none;border-radius:3px 0 0 3px;box-sizing:border-box;"></div><div class="t" style="left:531.69px;top:574.68px;font-size:22.67px;line-height:22.67px;color:#111;transform:scaleX(0.9450);">15.11.2014</div><div class="t" style="left:672.31px;top:574.68px;font-size:22.67px;line-height:22.67px;color:#111;transform:scaleX(0.9658);">200</div><div class="t" style="left:795.10px;top:574.68px;font-size:22.67px;line-height:22.67px;color:#111;transform:scaleX(0.9349);">Проживание</div><div class="t" style="left:951.54px;top:574.68px;font-size:22.67px;line-height:22.67px;color:#111;transform:scaleX(0.9146);">Безналичный</div><div class="t" style="left:1160.25px;top:574.68px;font-size:22.67px;line-height:22.67px;color:#111;transform:scaleX(0.9300);">1</div><div class="t" style="left:1244.73px;top:574.68px;font-size:22.67px;line-height:22.67px;color:#111;transform:scaleX(0.9350);">3 500,00р.</div><div class="b" style="left:1355.80px;top:572.68px;width:21.50px;height:21.50px;background:#3eb56f;border-radius:50%;"></div><div class="t" style="left:1454.00px;top:574.68px;font-size:22.67px;line-height:22.67px;color:#111;transform:scaleX(0.9450);">15.11.2014</div><div class="t" style="left:1572.70px;top:574.68px;font-size:22.67px;line-height:22.67px;color:#111;transform:scaleX(0.8718);">Админов А. А.</div><div class="t" style="left:1783.95px;top:574.68px;font-size:22.67px;line-height:22.67px;color:#111;transform:scaleX(0.9300);">10.11.2014 4:06:46</div><div class="b" style="left:385.30px;top:604.66px;width:1583.50px;height:40.68px;background:#f2f2f2;"></div><div class="t" style="left:393.15px;top:615.36px;font-size:22.67px;line-height:22.67px;color:#111;transform:scaleX(0.9300);">6</div><div class="b" style="left:460.00px;top:614.66px;width:17.00px;height:23.60px;background:#fff;border:1px solid #d5d5d5;border-right:none;border-radius:3px 0 0 3px;box-sizing:border-box;"></div><div class="t" style="left:531.69px;top:615.36px;font-size:22.67px;line-height:22.67px;color:#111;transform:scaleX(0.9450);">16.11.2014</div><div class="t" style="left:672.31px;top:615.36px;font-size:22.67px;line-height:22.67px;color:#111;transform:scaleX(0.9658);">200</div><div class="t" style="left:795.10px;top:615.36px;font-size:22.67px;line-height:22.67px;color:#111;transform:scaleX(0.9349);">Проживание</div><div class="t" style="left:951.54px;top:615.36px;font-size:22.67px;line-height:22.67px;color:#111;transform:scaleX(0.9146);">Безналичный</div><div class="t" style="left:1160.25px;top:615.36px;font-size:22.67px;line-height:22.67px;color:#111;transform:scaleX(0.9300);">1</div><div class="t" style="left:1244.73px;top:615.36px;font-size:22.67px;line-height:22.67px;color:#111;transform:scaleX(0.9350);">3 500,00р.</div><div class="b" style="left:1355.80px;top:613.36px;width:21.50px;height:21.50px;background:#3eb56f;border-radius:50%;"></div><div class="t" style="left:1454.00px;top:615.36px;font-size:22.67px;line-height:22.67px;color:#111;transform:scaleX(0.9450);">16.11.2014</div><div class="t" style="left:1572.70px;top:615.36px;font-size:22.67px;line-height:22.67px;color:#111;transform:scaleX(0.8718);">Админов А. А.</div><div class="t" style="left:1783.95px;top:615.36px;font-size:22.67px;line-height:22.67px;color:#111;transform:scaleX(0.9300);">10.11.2014 4:06:46</div><div class="t" style="left:393.15px;top:656.04px;font-size:22.67px;line-height:22.67px;color:#111;transform:scaleX(0.9300);">7</div><div class="b" style="left:460.00px;top:655.34px;width:17.00px;height:23.60px;background:#fff;border:1px solid #d5d5d5;border-right:none;border-radius:3px 0 0 3px;box-sizing:border-box;"></div><div class="t" style="left:531.69px;top:656.04px;font-size:22.67px;line-height:22.67px;color:#111;transform:scaleX(0.9450);">17.11.2014</div><div class="t" style="left:672.31px;top:656.04px;font-size:22.67px;line-height:22.67px;color:#111;transform:scaleX(0.9658);">200</div><div class="t" style="left:795.10px;top:656.04px;font-size:22.67px;line-height:22.67px;color:#111;transform:scaleX(0.9349);">Проживание</div><div class="t" style="left:951.54px;top:656.04px;font-size:22.67px;line-height:22.67px;color:#111;transform:scaleX(0.9146);">Безналичный</div><div class="t" style="left:1160.25px;top:656.04px;font-size:22.67px;line-height:22.67px;color:#111;transform:scaleX(0.9300);">1</div><div class="t" style="left:1244.73px;top:656.04px;font-size:22.67px;line-height:22.67px;color:#111;transform:scaleX(0.9350);">3 500,00р.</div><div class="b" style="left:1355.80px;top:654.04px;width:21.50px;height:21.50px;background:#3eb56f;border-radius:50%;"></div><div class="t" style="left:1454.00px;top:656.04px;font-size:22.67px;line-height:22.67px;color:#111;transform:scaleX(0.9450);">17.11.2014</div><div class="t" style="left:1572.70px;top:656.04px;font-size:22.67px;line-height:22.67px;color:#111;transform:scaleX(0.8718);">Админов А. А.</div><div class="t" style="left:1783.95px;top:656.04px;font-size:22.67px;line-height:22.67px;color:#111;transform:scaleX(0.9300);">10.11.2014 4:06:46</div><div class="b" style="left:385.30px;top:686.02px;width:1583.50px;height:40.68px;background:#f2f2f2;"></div><div class="t" style="left:393.25px;top:696.72px;font-size:22.67px;line-height:22.67px;color:#111;transform:scaleX(0.9300);">8</div><div class="b" style="left:460.00px;top:696.02px;width:17.00px;height:23.60px;background:#fff;border:1px solid #d5d5d5;border-right:none;border-radius:3px 0 0 3px;box-sizing:border-box;"></div><div class="t" style="left:531.69px;top:696.72px;font-size:22.67px;line-height:22.67px;color:#111;transform:scaleX(0.9450);">18.11.2014</div><div class="t" style="left:672.31px;top:696.72px;font-size:22.67px;line-height:22.67px;color:#111;transform:scaleX(0.9658);">200</div><div class="t" style="left:795.10px;top:696.72px;font-size:22.67px;line-height:22.67px;color:#111;transform:scaleX(0.9349);">Проживание</div><div class="t" style="left:951.54px;top:696.72px;font-size:22.67px;line-height:22.67px;color:#111;transform:scaleX(0.9146);">Безналичный</div><div class="t" style="left:1160.25px;top:696.72px;font-size:22.67px;line-height:22.67px;color:#111;transform:scaleX(0.9300);">1</div><div class="t" style="left:1244.73px;top:696.72px;font-size:22.67px;line-height:22.67px;color:#111;transform:scaleX(0.9350);">3 500,00р.</div><div class="b" style="left:1355.80px;top:694.72px;width:21.50px;height:21.50px;background:#3eb56f;border-radius:50%;"></div><div class="t" style="left:1454.00px;top:696.72px;font-size:22.67px;line-height:22.67px;color:#111;transform:scaleX(0.9450);">18.11.2014</div><div class="t" style="left:1572.70px;top:696.72px;font-size:22.67px;line-height:22.67px;color:#111;transform:scaleX(0.8718);">Админов А. А.</div><div class="t" style="left:1783.95px;top:696.72px;font-size:22.67px;line-height:22.67px;color:#111;transform:scaleX(0.9300);">10.11.2014 4:06:46</div><div class="t" style="left:393.25px;top:737.40px;font-size:22.67px;line-height:22.67px;color:#111;transform:scaleX(0.9300);">9</div><div class="b" style="left:460.00px;top:736.70px;width:17.00px;height:23.60px;background:#fff;border:1px solid #d5d5d5;border-right:none;border-radius:3px 0 0 3px;box-sizing:border-box;"></div><div class="t" style="left:531.69px;top:737.40px;font-size:22.67px;line-height:22.67px;color:#111;transform:scaleX(0.9450);">19.11.2014</div><div class="t" style="left:672.31px;top:737.40px;font-size:22.67px;line-height:22.67px;color:#111;transform:scaleX(0.9658);">200</div><div class="t" style="left:795.10px;top:737.40px;font-size:22.67px;line-height:22.67px;color:#111;transform:scaleX(0.9349);">Проживание</div><div class="t" style="left:951.54px;top:737.40px;font-size:22.67px;line-height:22.67px;color:#111;transform:scaleX(0.9146);">Безналичный</div><div class="t" style="left:1160.25px;top:737.40px;font-size:22.67px;line-height:22.67px;color:#111;transform:scaleX(0.9300);">1</div><div class="t" style="left:1244.73px;top:737.40px;font-size:22.67px;line-height:22.67px;color:#111;transform:scaleX(0.9350);">3 500,00р.</div><div class="b" style="left:1355.80px;top:735.40px;width:21.50px;height:21.50px;background:#3eb56f;border-radius:50%;"></div><div class="t" style="left:1454.00px;top:737.40px;font-size:22.67px;line-height:22.67px;color:#111;transform:scaleX(0.9450);">19.11.2014</div><div class="t" style="left:1572.70px;top:737.40px;font-size:22.67px;line-height:22.67px;color:#111;transform:scaleX(0.8718);">Админов А. А.</div><div class="t" style="left:1783.95px;top:737.40px;font-size:22.67px;line-height:22.67px;color:#111;transform:scaleX(0.9300);">10.11.2014 4:06:46</div><div class="b" style="left:385.30px;top:767.38px;width:1583.50px;height:40.68px;background:#f2f2f2;"></div><div class="t" style="left:392.62px;top:778.08px;font-size:22.67px;line-height:22.67px;color:#111;transform:scaleX(0.9300);">10</div><div class="b" style="left:460.00px;top:777.38px;width:17.00px;height:23.60px;background:#fff;border:1px solid #d5d5d5;border-right:none;border-radius:3px 0 0 3px;box-sizing:border-box;"></div><div class="t" style="left:532.23px;top:778.08px;font-size:22.67px;line-height:22.67px;color:#111;transform:scaleX(0.9450);">20.11.2014</div><div class="t" style="left:672.31px;top:778.08px;font-size:22.67px;line-height:22.67px;color:#111;transform:scaleX(0.9658);">200</div><div class="t" style="left:795.10px;top:778.08px;font-size:22.67px;line-height:22.67px;color:#111;transform:scaleX(0.9349);">Проживание</div><div class="t" style="left:951.54px;top:778.08px;font-size:22.67px;line-height:22.67px;color:#111;transform:scaleX(0.9146);">Безналичный</div><div class="t" style="left:1160.25px;top:778.08px;font-size:22.67px;line-height:22.67px;color:#111;transform:scaleX(0.9300);">1</div><div class="t" style="left:1244.73px;top:778.08px;font-size:22.67px;line-height:22.67px;color:#111;transform:scaleX(0.9350);">3 500,00р.</div><div class="b" style="left:1355.80px;top:776.08px;width:21.50px;height:21.50px;background:#3eb56f;border-radius:50%;"></div><div class="t" style="left:1454.00px;top:778.08px;font-size:22.67px;line-height:22.67px;color:#111;transform:scaleX(0.9450);">20.11.2014</div><div class="t" style="left:1572.70px;top:778.08px;font-size:22.67px;line-height:22.67px;color:#111;transform:scaleX(0.8718);">Админов А. А.</div><div class="t" style="left:1783.95px;top:778.08px;font-size:22.67px;line-height:22.67px;color:#111;transform:scaleX(0.9300);">10.11.2014 4:06:46</div><div class="t" style="left:392.62px;top:818.76px;font-size:22.67px;line-height:22.67px;color:#111;transform:scaleX(0.9300);">11</div><div class="b" style="left:460.00px;top:818.06px;width:17.00px;height:23.60px;background:#fff;border:1px solid #d5d5d5;border-right:none;border-radius:3px 0 0 3px;box-sizing:border-box;"></div><div class="t" style="left:532.23px;top:818.76px;font-size:22.67px;line-height:22.67px;color:#111;transform:scaleX(0.9450);">21.11.2014</div><div class="t" style="left:672.31px;top:818.76px;font-size:22.67px;line-height:22.67px;color:#111;transform:scaleX(0.9658);">200</div><div class="t" style="left:795.10px;top:818.76px;font-size:22.67px;line-height:22.67px;color:#111;transform:scaleX(0.9349);">Проживание</div><div class="t" style="left:951.54px;top:818.76px;font-size:22.67px;line-height:22.67px;color:#111;transform:scaleX(0.9146);">Безналичный</div><div class="t" style="left:1160.25px;top:818.76px;font-size:22.67px;line-height:22.67px;color:#111;transform:scaleX(0.9300);">1</div><div class="t" style="left:1244.73px;top:818.76px;font-size:22.67px;line-height:22.67px;color:#111;transform:scaleX(0.9350);">3 500,00р.</div><div class="b" style="left:1355.80px;top:816.76px;width:21.50px;height:21.50px;background:#3eb56f;border-radius:50%;"></div><div class="t" style="left:1454.00px;top:818.76px;font-size:22.67px;line-height:22.67px;color:#111;transform:scaleX(0.9450);">21.11.2014</div><div class="t" style="left:1572.70px;top:818.76px;font-size:22.67px;line-height:22.67px;color:#111;transform:scaleX(0.8718);">Админов А. А.</div><div class="t" style="left:1783.95px;top:818.76px;font-size:22.67px;line-height:22.67px;color:#111;transform:scaleX(0.9300);">10.11.2014 4:06:46</div><div class="b" style="left:385.30px;top:848.74px;width:1583.50px;height:40.68px;background:#f2f2f2;"></div><div class="t" style="left:392.62px;top:859.44px;font-size:22.67px;line-height:22.67px;color:#111;transform:scaleX(0.9300);">12</div><div class="b" style="left:460.00px;top:858.74px;width:17.00px;height:23.60px;background:#fff;border:1px solid #d5d5d5;border-right:none;border-radius:3px 0 0 3px;box-sizing:border-box;"></div><div class="t" style="left:532.23px;top:859.44px;font-size:22.67px;line-height:22.67px;color:#111;transform:scaleX(0.9450);">22.11.2014</div><div class="t" style="left:672.31px;top:859.44px;font-size:22.67px;line-height:22.67px;color:#111;transform:scaleX(0.9658);">200</div><div class="t" style="left:795.10px;top:859.44px;font-size:22.67px;line-height:22.67px;color:#111;transform:scaleX(0.9349);">Проживание</div><div class="t" style="left:951.54px;top:859.44px;font-size:22.67px;line-height:22.67px;color:#111;transform:scaleX(0.9146);">Безналичный</div><div class="t" style="left:1160.25px;top:859.44px;font-size:22.67px;line-height:22.67px;color:#111;transform:scaleX(0.9300);">1</div><div class="t" style="left:1244.73px;top:859.44px;font-size:22.67px;line-height:22.67px;color:#111;transform:scaleX(0.9350);">3 500,00р.</div><div class="b" style="left:1355.80px;top:857.44px;width:21.50px;height:21.50px;background:#3eb56f;border-radius:50%;"></div><div class="t" style="left:1454.00px;top:859.44px;font-size:22.67px;line-height:22.67px;color:#111;transform:scaleX(0.9450);">22.11.2014</div><div class="t" style="left:1572.70px;top:859.44px;font-size:22.67px;line-height:22.67px;color:#111;transform:scaleX(0.8718);">Админов А. А.</div><div class="t" style="left:1783.95px;top:859.44px;font-size:22.67px;line-height:22.67px;color:#111;transform:scaleX(0.9300);">10.11.2014 4:06:46</div><div class="t" style="left:392.62px;top:900.12px;font-size:22.67px;line-height:22.67px;color:#111;transform:scaleX(0.9300);">13</div><div class="b" style="left:460.00px;top:899.42px;width:17.00px;height:23.60px;background:#fff;border:1px solid #d5d5d5;border-right:none;border-radius:3px 0 0 3px;box-sizing:border-box;"></div><div class="t" style="left:532.23px;top:900.12px;font-size:22.67px;line-height:22.67px;color:#111;transform:scaleX(0.9450);">23.11.2014</div><div class="t" style="left:672.31px;top:900.12px;font-size:22.67px;line-height:22.67px;color:#111;transform:scaleX(0.9658);">200</div><div class="t" style="left:795.10px;top:900.12px;font-size:22.67px;line-height:22.67px;color:#111;transform:scaleX(0.9349);">Проживание</div><div class="t" style="left:951.54px;top:900.12px;font-size:22.67px;line-height:22.67px;color:#111;transform:scaleX(0.9146);">Безналичный</div><div class="t" style="left:1160.25px;top:900.12px;font-size:22.67px;line-height:22.67px;color:#111;transform:scaleX(0.9300);">1</div><div class="t" style="left:1244.73px;top:900.12px;font-size:22.67px;line-height:22.67px;color:#111;transform:scaleX(0.9350);">3 500,00р.</div><div class="b" style="left:1355.80px;top:898.12px;width:21.50px;height:21.50px;background:#3eb56f;border-radius:50%;"></div><div class="t" style="left:1454.00px;top:900.12px;font-size:22.67px;line-height:22.67px;color:#111;transform:scaleX(0.9450);">23.11.2014</div><div class="t" style="left:1572.70px;top:900.12px;font-size:22.67px;line-height:22.67px;color:#111;transform:scaleX(0.8718);">Админов А. А.</div><div class="t" style="left:1783.95px;top:900.12px;font-size:22.67px;line-height:22.67px;color:#111;transform:scaleX(0.9300);">10.11.2014 4:06:46</div></div>
<div class="t" style="left:1184.49px;top:920.82px;font-size:20.64px;line-height:20.64px;color:#777;font-weight:bold;transform:scaleX(0.9046);">Всего: 74900,00</div>
<div class="t" style="left:384.73px;top:963.25px;font-size:20.49px;line-height:20.49px;color:#999;transform:scaleX(0.9130);">Текущий баланс</div>
<div class="t" style="left:387.24px;top:994.65px;font-size:22.38px;line-height:22.38px;color:#111;transform:scaleX(0.9509);">74 900,00р.</div>
<div class="t" style="left:923.45px;top:963.25px;font-size:20.49px;line-height:20.49px;color:#999;transform:scaleX(0.9454);">Прогнозируемые начисления</div>
<div class="t" style="left:927.34px;top:994.65px;font-size:22.38px;line-height:22.38px;color:#111;transform:scaleX(0.9509);">8 200,00р.</div>
<div class="t" style="left:1464.47px;top:963.25px;font-size:20.49px;line-height:20.49px;color:#999;transform:scaleX(0.9329);">Всего</div>
<div class="t" style="left:1468.04px;top:994.65px;font-size:22.38px;line-height:22.38px;color:#111;transform:scaleX(0.9517);">83 100,00р.</div>
<div class="b" style="left:345.00px;top:1051.00px;width:1691.00px;height:64.50px;background:#eeeeee;border-top:1px solid #dadada;box-sizing:border-box;"></div>
<div class="b" style="left:378.90px;top:1061.20px;width:199.60px;height:44.50px;background:#fdfdfd;border:1px solid #d0d0d0;border-radius:3px;box-sizing:border-box;box-shadow:0 1px 1px rgba(0,0,0,0.13);"></div>
<svg class="i" style="left:407.80px;top:1075.00px;width:22.00px;height:18.50px;fill:#555;" viewBox="0 0 23 19.5" preserveAspectRatio="none"><path d="M0 11L3.5 7.5L8.5 12.5L19.5 1.5L23 5L8.5 19.5Z"/></svg>
<div class="t" style="left:436.84px;top:1072.68px;font-size:24.71px;line-height:24.71px;color:#606060;transform:scaleX(0.9355);">Сохранить</div>
<div class="b" style="left:589.50px;top:1061.20px;width:156.20px;height:44.50px;background:#fdfdfd;border:1px solid #d0d0d0;border-radius:3px;box-sizing:border-box;box-shadow:0 1px 1px rgba(0,0,0,0.13);"></div>
<div class="t" style="left:615.98px;top:1072.68px;font-size:24.71px;line-height:24.71px;color:#606060;transform:scaleX(0.9232);">Выселить</div>
<div class="b" style="left:1858.00px;top:1061.90px;width:144.00px;height:42.60px;background:#fdfdfd;border:1px solid #d0d0d0;border-radius:3px;box-sizing:border-box;box-shadow:0 1px 1px rgba(0,0,0,0.13);"></div>
<div class="t" style="left:1884.58px;top:1072.68px;font-size:24.71px;line-height:24.71px;color:#2e78bd;transform:scaleX(0.9477);">Закрыть</div>
<div class="b" style="left:0.00px;top:1115.50px;width:2036.00px;height:44.50px;background:#686868;"></div>
<div class="t" style="left:1837.57px;top:1129.70px;font-size:22.67px;line-height:22.67px;color:#fff;font-weight:bold;transform:scaleX(0.9189);">03 декабря 2014</div>
</div></body></html>
